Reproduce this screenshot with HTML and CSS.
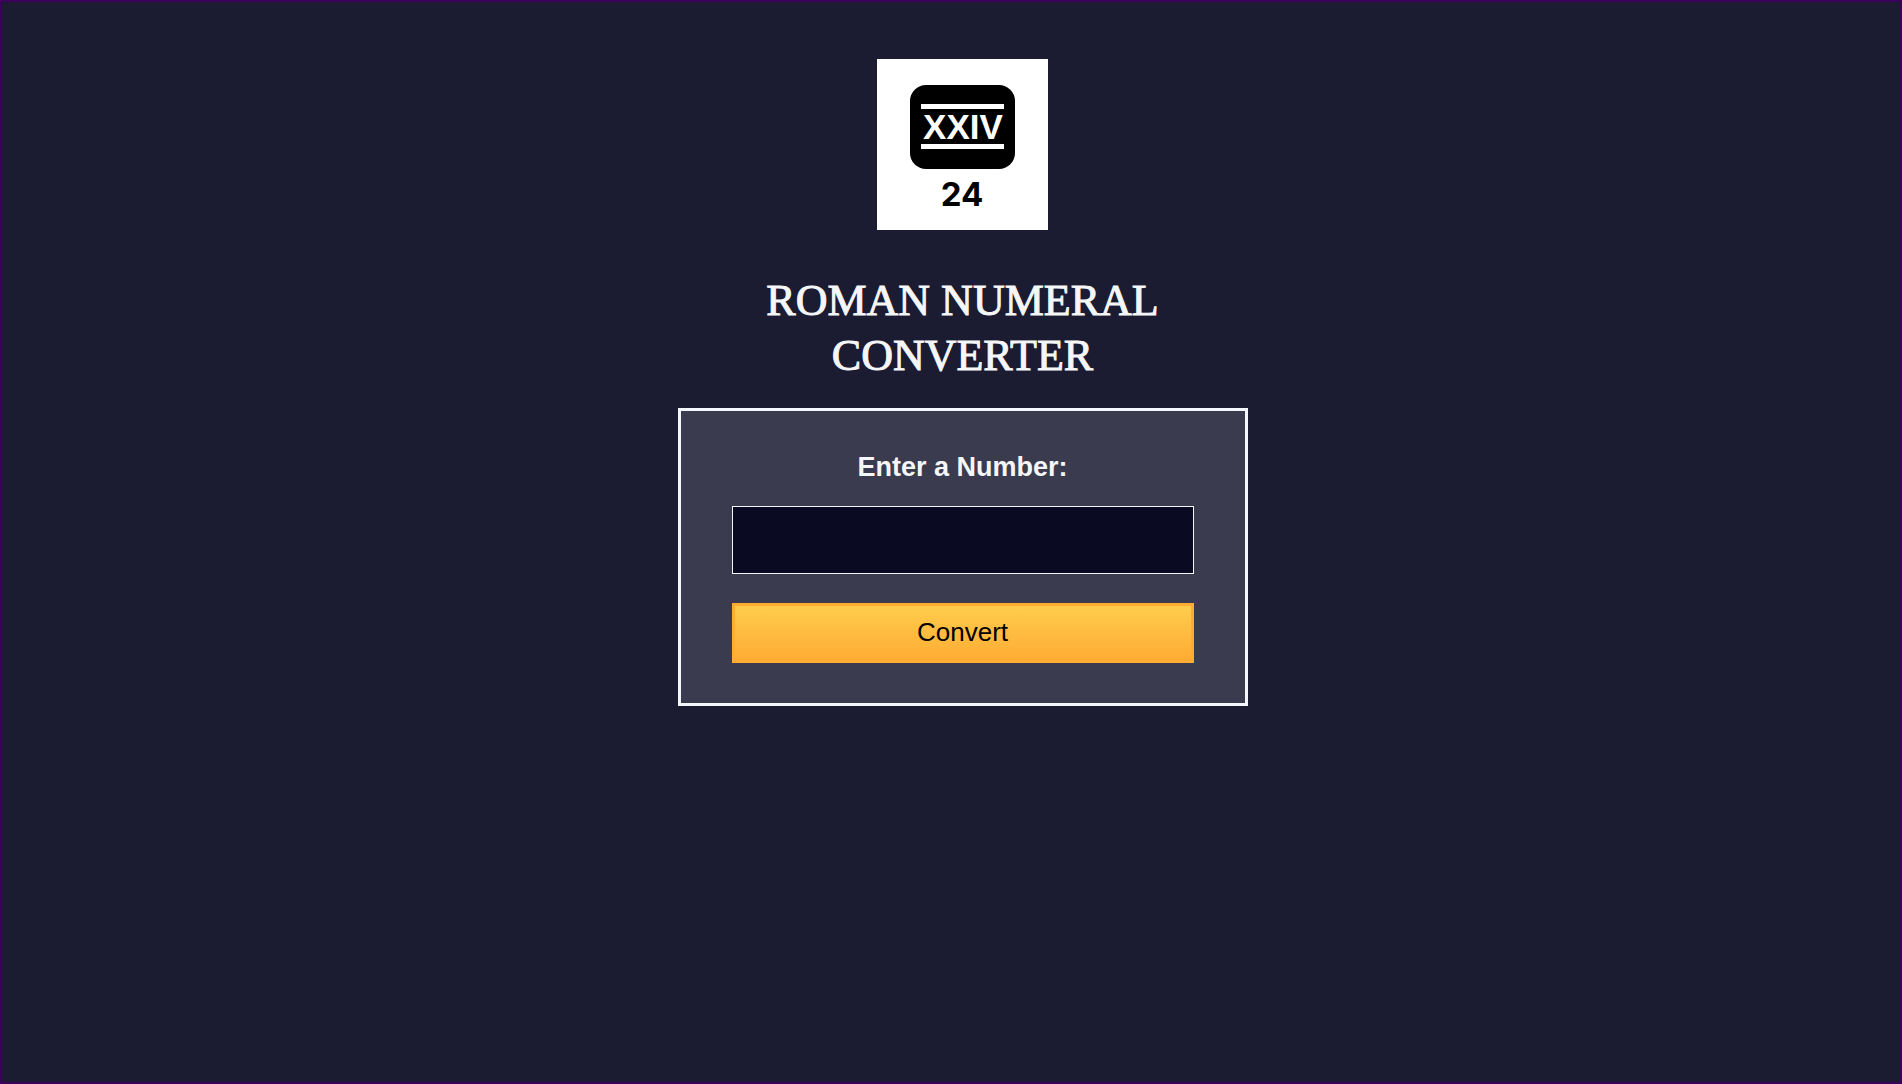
FILE: index.html
```html
<!DOCTYPE html>
<html lang="en">
<head>
  <meta charset="utf-8">
  <meta name="viewport" content="width=device-width, initial-scale=1">
  <title>Roman Numeral Converter</title>
  <link rel="stylesheet" href="styles.css">
</head>
<body>
  <main class="converter">
    <svg class="logo" viewBox="0 0 171 171" role="img" aria-label="XXIV, 24">
      <rect width="171" height="171" fill="#fff"/>
      <rect x="33" y="26" width="105" height="84" rx="16" fill="#000"/>
      <rect x="44" y="45" width="83" height="5" fill="#fff"/>
      <rect x="44" y="85" width="83" height="5" fill="#fff"/>
      <text class="logo-numeral" x="86" y="80">XXIV</text>
      <text class="logo-number" x="85" y="147">24</text>
    </svg>
    <h1 class="title">Roman Numeral Converter</h1>
    <form class="panel">
      <label class="panel-label" for="number">Enter a Number:</label>
      <input class="panel-input" id="number" type="number">
      <button class="panel-button" type="button">Convert</button>
    </form>
  </main>
</body>
</html>
```
FILE: styles.css
```css
* {
  box-sizing: border-box;
}

body {
  margin: 0;
  min-height: 100vh;
  border: 2px solid #3b005c;
  background: #1b1b32;
  color: #f5f6f7;
  font-family: "Liberation Sans", Arial, sans-serif;
}

.converter {
  display: flex;
  flex-direction: column;
  align-items: center;
  padding: 57px 0 24px 23px;
}

.logo {
  width: 171px;
  height: 171px;
}

.logo-numeral,
.logo-number {
  font-weight: 700;
  text-anchor: middle;
}

.logo-numeral {
  fill: #fff;
  font-size: 35px;
}

.logo-number {
  font-family: Inter, sans-serif;
  font-size: 33px;
}

.title {
  width: 100%;
  max-width: 480px;
  margin: 43px 0 25px;
  font-family: "Liberation Serif", "Times New Roman", serif;
  font-size: 44px;
  font-weight: 400;
  line-height: 55px;
  text-align: center;
  text-transform: uppercase;
  -webkit-text-stroke: 1px #f5f6f7;
}

.panel {
  display: flex;
  flex-direction: column;
  width: 100%;
  max-width: 570px;
  padding: 40px 51px;
  border: 3px solid #f5f6ff;
  background: #3b3b4f;
}

.panel-label {
  margin-bottom: 23px;
  font-size: 27px;
  font-weight: 700;
  line-height: 32px;
  text-align: center;
}

.panel-input {
  width: 100%;
  height: 68px;
  margin-bottom: 29px;
  padding: 8px;
  border: 1px solid #f5f6f7;
  border-radius: 0;
  background: #0a0a23;
  color: #f5f6f7;
  font: inherit;
  font-size: 27px;
  text-align: center;
}

.panel-button {
  height: 60px;
  padding: 0 6px 2px;
  border: 3px solid #feac32;
  background: linear-gradient(#fecc4c, #ffac33);
  color: #000;
  font: inherit;
  font-size: 26px;
  cursor: pointer;
}
```
